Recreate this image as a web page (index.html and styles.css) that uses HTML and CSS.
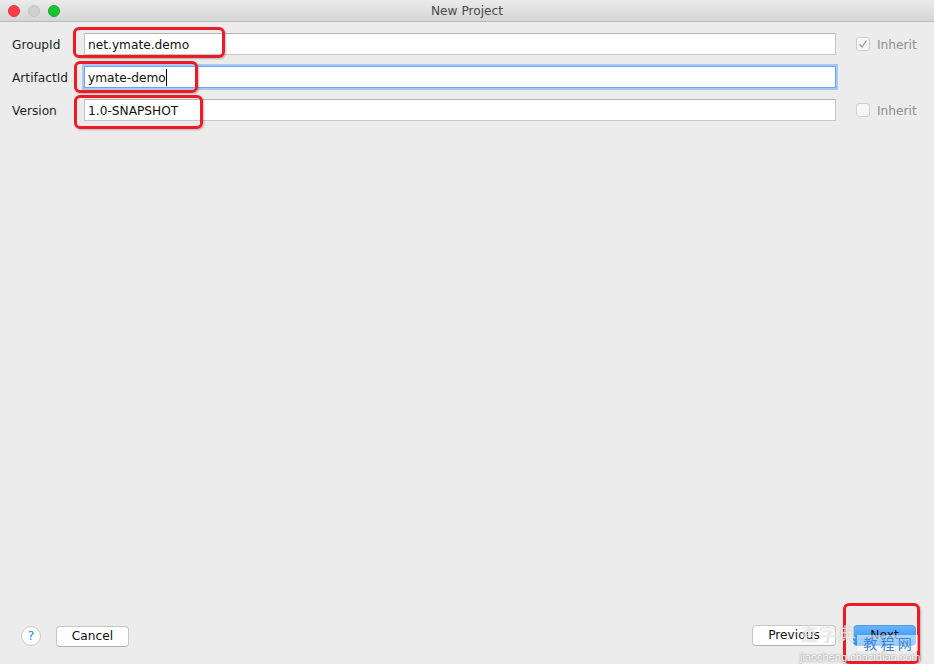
FILE: index.html
```html
<!DOCTYPE html>
<html>
<head>
<meta charset="utf-8">
<link rel="stylesheet" href="styles.css">
</head>
<body>
<div class="window">
  <div class="titlebar">
    <div class="lights">
      <span class="light red"></span>
      <span class="light gray"></span>
      <span class="light green"></span>
    </div>
    <div class="title">New Project</div>
  </div>

  <div class="form">
    <div class="row">
      <label class="label">GroupId</label>
      <div class="input">net.ymate.demo</div>
      <div class="inherit">
        <span class="check checked"><svg viewBox="0 0 14 14" width="14" height="14"><path d="M3.5 7.2 L6 10 L10.5 3.5" fill="none" stroke="#9a9a9a" stroke-width="1.3"/></svg></span>
        <span class="inherit-text">Inherit</span>
      </div>
    </div>
    <div class="row">
      <label class="label">ArtifactId</label>
      <div class="input focused">ymate-demo<span class="caret"></span></div>
      <div class="inherit empty"></div>
    </div>
    <div class="row">
      <label class="label">Version</label>
      <div class="input">1.0-SNAPSHOT</div>
      <div class="inherit">
        <span class="check"></span>
        <span class="inherit-text">Inherit</span>
      </div>
    </div>
  </div>

  <div class="footer">
    <div class="help">?</div>
    <div class="btn cancel">Cancel</div>
    <div class="spacer"></div>
    <div class="btn previous">Previous</div>
    <div class="btn next">Next</div>
  </div>

  <div class="mark mark-group"></div>
  <div class="mark mark-artifact"></div>
  <div class="mark mark-version"></div>
  <div class="mark mark-next"></div>

  <div class="wm wm-cn">查字典</div>
  <div class="wm wm-box">教 程 网</div>
  <div class="wm wm-url">jiaocheng.chazidian.com</div>
</div>
</body>
</html>
```

FILE: styles.css
```css
html, body {
  margin: 0;
  padding: 0;
}
body {
  background: #ececec;
  font-family: "DejaVu Sans", "Liberation Sans", sans-serif;
  font-size: 12.2px;
  color: #1a1a1a;
}
.window {
  position: relative;
  width: 934px;
  height: 664px;
  display: flex;
  flex-direction: column;
  background: #ececec;
  overflow: hidden;
}
.titlebar {
  position: relative;
  height: 22px;
  box-sizing: border-box;
  border-bottom: 1px solid #b9b9b9;
  background: linear-gradient(#ebebeb, #d5d5d5);
  display: flex;
  align-items: center;
  justify-content: center;
}
.lights {
  position: absolute;
  left: 8px;
  top: 5px;
  display: flex;
  gap: 8px;
}
.light {
  width: 12px;
  height: 12px;
  border-radius: 50%;
  box-sizing: border-box;
}
.light.red { background: #fc3d45; border: 1px solid #e2353c; }
.light.gray { background: #d0d0d0; border: 1px solid #c2c2c2; }
.light.green { background: #1ac332; border: 1px solid #14a828; }
.title {
  font-size: 12.2px;
  color: #4a4a4a;
}
.form {
  flex: 1;
  padding: 11px 0 0 12px;
  display: flex;
  flex-direction: column;
  gap: 11px;
}
.row {
  display: flex;
  align-items: center;
  height: 22px;
}
.label {
  width: 72px;
  padding-top: 2px;
  color: #1f1f1f;
}
.input {
  position: relative;
  width: 752px;
  height: 22px;
  box-sizing: border-box;
  background: #fff;
  border: 1px solid #c5c5c5;
  border-top-color: #b4b4b4;
  padding: 1px 0 0 3px;
  line-height: 20px;
  color: #111;
}
.input.focused {
  border-color: #6fa5ee;
  box-shadow: 0 0 0 2px #a9c9f4;
}
.caret {
  display: inline-block;
  width: 1px;
  height: 17px;
  background: #000;
  vertical-align: -4px;
}
.inherit {
  display: flex;
  align-items: center;
  margin-left: 20px;
  gap: 7px;
}
.check {
  width: 14px;
  height: 14px;
  box-sizing: border-box;
  border: 1px solid #d0d0d0;
  border-radius: 3px;
  background: #f6f6f6;
  display: flex;
}
.check svg {
  margin: -1px;
}
.inherit-text {
  color: #8e8e8e;
  padding-top: 2px;
}
.footer {
  height: 22px;
  padding: 0 18px 18px 21px;
  display: flex;
  align-items: center;
}
.spacer { flex: 1; }
.help {
  width: 20px;
  height: 20px;
  box-sizing: border-box;
  border-radius: 50%;
  border: 1px solid #c8c8c8;
  background: #fff;
  color: #2a8cf0;
  font-size: 13px;
  text-align: center;
  line-height: 18px;
  margin-right: 15px;
  margin-top: 2px;
}
.btn {
  height: 21px;
  box-sizing: border-box;
  border: 1px solid #c6c6c6;
  border-bottom-color: #b0b0b0;
  border-radius: 4px;
  background: #fff;
  text-align: center;
  line-height: 19px;
  color: #111;
}
.cancel {
  width: 73px;
  margin-top: 3px;
}
.previous {
  width: 84px;
  margin-right: 17px;
}
.next {
  width: 63px;
  border-color: #4f98ea;
  background: linear-gradient(#6db3fb, #1f8cff);
  color: #111;
}
.mark {
  position: absolute;
  border: 3px solid #ec1c24;
  border-radius: 6px;
  box-shadow: 1px 1px 2px rgba(0,0,0,0.25);
  box-sizing: border-box;
}
.mark-group { left: 73px; top: 27px; width: 152px; height: 31px; }
.mark-artifact { left: 74px; top: 61px; width: 124px; height: 32px; }
.mark-version { left: 74px; top: 95px; width: 129px; height: 34px; }
.mark-next { left: 843px; top: 603px; width: 77px; height: 61px; }
.wm {
  position: absolute;
  font-family: "Noto Sans CJK SC", "Liberation Sans", sans-serif;
}
.wm-cn {
  left: 800px;
  top: 622px;
  font-size: 18px;
  line-height: 22px;
  color: rgba(255,255,255,0.7);
  text-shadow: 0 0 1px rgba(120,120,120,0.5);
  letter-spacing: 1px;
}
.wm-box {
  left: 857px;
  top: 635px;
  width: 61px;
  height: 16px;
  line-height: 16px;
  font-size: 14px;
  text-align: center;
  background: rgba(255,255,255,0.55);
  color: #3e84d8;
}
.wm-url {
  left: 800px;
  top: 651px;
  font-family: "Liberation Sans", Arial, sans-serif;
  font-size: 11px;
  color: rgba(255,255,255,0.9);
  text-shadow: 0 0 2px rgba(90,90,90,0.8);
}
```
